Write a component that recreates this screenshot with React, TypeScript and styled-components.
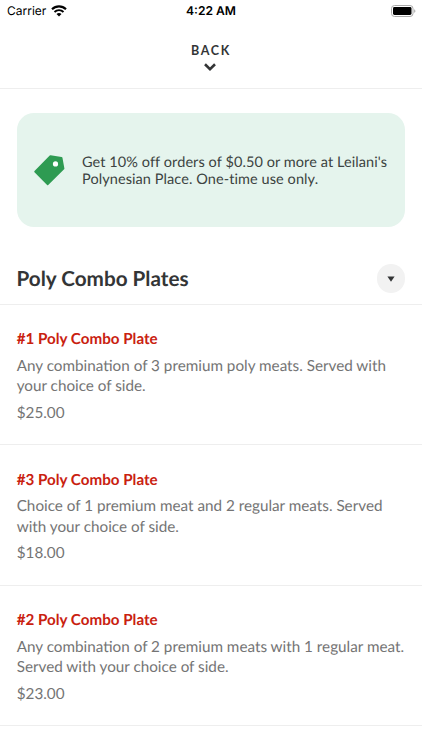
import React from "react";
import styled, { createGlobalStyle } from "styled-components";

const GlobalStyle = createGlobalStyle`
  *, *::before, *::after { box-sizing: border-box; }
  body { margin: 0; background: #fff; overflow: hidden; }
  h1, h2, p { margin: 0; }
  button { border: 0; padding: 0; font: inherit; color: inherit; }
`;

const Screen = styled.div`
  width: 422px;
  height: 750px;
  overflow: hidden;
  background: #fff;
  color: #333536;
  font-family: Lato, "Open Sans", sans-serif;
  text-rendering: geometricPrecision;
`;

const StatusBar = styled.div`
  display: grid;
  grid-template-columns: 1fr auto 1fr;
  align-items: center;
  height: 22px;
  padding: 0 6px 0 7px;
  color: #000;
  font-family: Inter, "Liberation Sans", sans-serif;
  font-size: 12px;
  line-height: 22px;
`;

const Carrier = styled.div`
  display: flex;
  align-items: center;
  gap: 5px;
`;

const Clock = styled.span`
  margin-right: 1px;
  font-size: 12.1px;
  font-weight: 600;
`;

const BatterySlot = styled.div`
  display: flex;
  justify-content: flex-end;
`;

const BackButton = styled.button`
  display: flex;
  flex-direction: column;
  align-items: center;
  width: 100%;
  height: 67px;
  padding-top: 20px;
  background: #fff;
  border-bottom: 1px solid #eee;
`;

const BackLabel = styled.span`
  font-size: 12.5px;
  line-height: 17px;
  font-weight: 700;
  letter-spacing: 1.65px;
`;

const Chevron = styled.svg`
  margin-top: 4px;
  margin-right: 1.6px;
`;

const Promo = styled.section`
  display: flex;
  align-items: center;
  height: 114px;
  margin: 24.4px 17px 0 17px;
  padding-left: 17px;
  border-radius: 17px;
  background: #e5f4ed;
`;

const PromoText = styled.p`
  margin-left: 17px;
  padding-top: 2px;
  color: #3c4341;
  font-size: 14.5px;
  line-height: 17.5px;
  letter-spacing: 0.08px;
  white-space: pre-line;
`;

const SectionHeader = styled.header`
  display: flex;
  align-items: center;
  justify-content: space-between;
  height: 77.5px;
  padding: 26px 17px 0 16.5px;
  border-bottom: 1px solid #eee;
`;

const SectionTitle = styled.h1`
  padding-top: 1.5px;
  font-size: 20.7px;
  line-height: 26px;
  font-weight: 700;
`;

const RoundButton = styled.button`
  display: flex;
  align-items: center;
  justify-content: center;
  width: 28.5px;
  height: 28.5px;
  border-radius: 50%;
  background: #f2f2f2;
`;

const Item = styled.article`
  height: 140.5px;
  padding: 24.5px 0 0 16.7px;
  border-bottom: 1px solid #eee;
  white-space: pre-line;
`;

const ItemTitle = styled.h2`
  color: #c9210f;
  font-size: 15.2px;
  line-height: 20px;
  font-weight: 700;
`;

const Description = styled.p`
  margin-top: 6.5px;
  color: #747474;
  font-size: 15.25px;
  line-height: 20.4px;
`;

const Price = styled.p`
  margin-top: 6px;
  color: #747474;
  font-size: 15.25px;
  line-height: 20px;
`;

const plates = [
  {
    name: "#1 Poly Combo Plate",
    description: "Any combination of 3 premium poly meats. Served with\nyour choice of side.",
    price: "$25.00",
  },
  {
    name: "#3 Poly Combo Plate",
    description: "Choice of 1 premium meat and 2 regular meats. Served\nwith your choice of side.",
    price: "$18.00",
  },
  {
    name: "#2 Poly Combo Plate",
    description: "Any combination of 2 premium meats with 1 regular meat.\nServed with your choice of side.",
    price: "$23.00",
  },
];

const WifiIcon = () => (
  <svg width="16" height="12" viewBox="0 0 16 12" fill="none" stroke="#000">
    <path d="M1 4.2a10 10 0 0 1 14 0" strokeWidth="2.1" />
    <path d="M3.5 7a6.4 6.4 0 0 1 9 0" strokeWidth="1.9" />
    <path d="M8 11.6 5.5 9.1a3.6 3.6 0 0 1 5 0Z" fill="#000" stroke="none" />
  </svg>
);

const BatteryIcon = () => (
  <svg width="25" height="12" viewBox="0 0 25 12">
    <rect x="0.5" y="0.5" width="21.5" height="11" rx="3" fill="#fff" stroke="#aaa" />
    <rect x="2" y="2" width="18.5" height="8" rx="1.4" fill="#000" />
    <path d="M23.3 4.2c1.4.5 1.4 3.1 0 3.6Z" fill="#999" />
  </svg>
);

const TagIcon = () => (
  <svg width="31" height="31" viewBox="0 0 31 31">
    <path
      fill="#2e9b52"
      d="M16.6.2 27.6 1.9a1 1 0 0 1 .8.7L30.4 13.4a1 1 0 0 1-.3.9L14.2 30a.8.8 0 0 1-1.1 0L.5 17.2a.8.8 0 0 1 0-1.1L15.7.5a1 1 0 0 1 .9-.3Z"
    />
    <circle cx="21.5" cy="8.9" r="2.6" fill="#fff" />
  </svg>
);

export default function App() {
  return (
    <>
      <GlobalStyle />
      <Screen>
        <StatusBar>
          <Carrier>
            Carrier
            <WifiIcon />
          </Carrier>
          <Clock>4:22 AM</Clock>
          <BatterySlot>
            <BatteryIcon />
          </BatterySlot>
        </StatusBar>
        <BackButton>
          <BackLabel>BACK</BackLabel>
          <Chevron width="12" height="8" viewBox="0 0 12 8" fill="none" stroke="#333536" strokeWidth="2.6">
            <path d="m1 1.3 5 4.8 5-4.8" />
          </Chevron>
        </BackButton>
        <Promo>
          <TagIcon />
          <PromoText>{"Get 10% off orders of $0.50 or more at Leilani's\nPolynesian Place. One-time use only."}</PromoText>
        </Promo>
        <SectionHeader>
          <SectionTitle>Poly Combo Plates</SectionTitle>
          <RoundButton aria-label="Choose section">
            <svg width="8" height="6" viewBox="0 0 8 6">
              <path d="M.4.4h7.2L4 5.8Z" fill="#333536" />
            </svg>
          </RoundButton>
        </SectionHeader>
        {plates.map((plate) => (
          <Item key={plate.name}>
            <ItemTitle>{plate.name}</ItemTitle>
            <Description>{plate.description}</Description>
            <Price>{plate.price}</Price>
          </Item>
        ))}
      </Screen>
    </>
  );
}
